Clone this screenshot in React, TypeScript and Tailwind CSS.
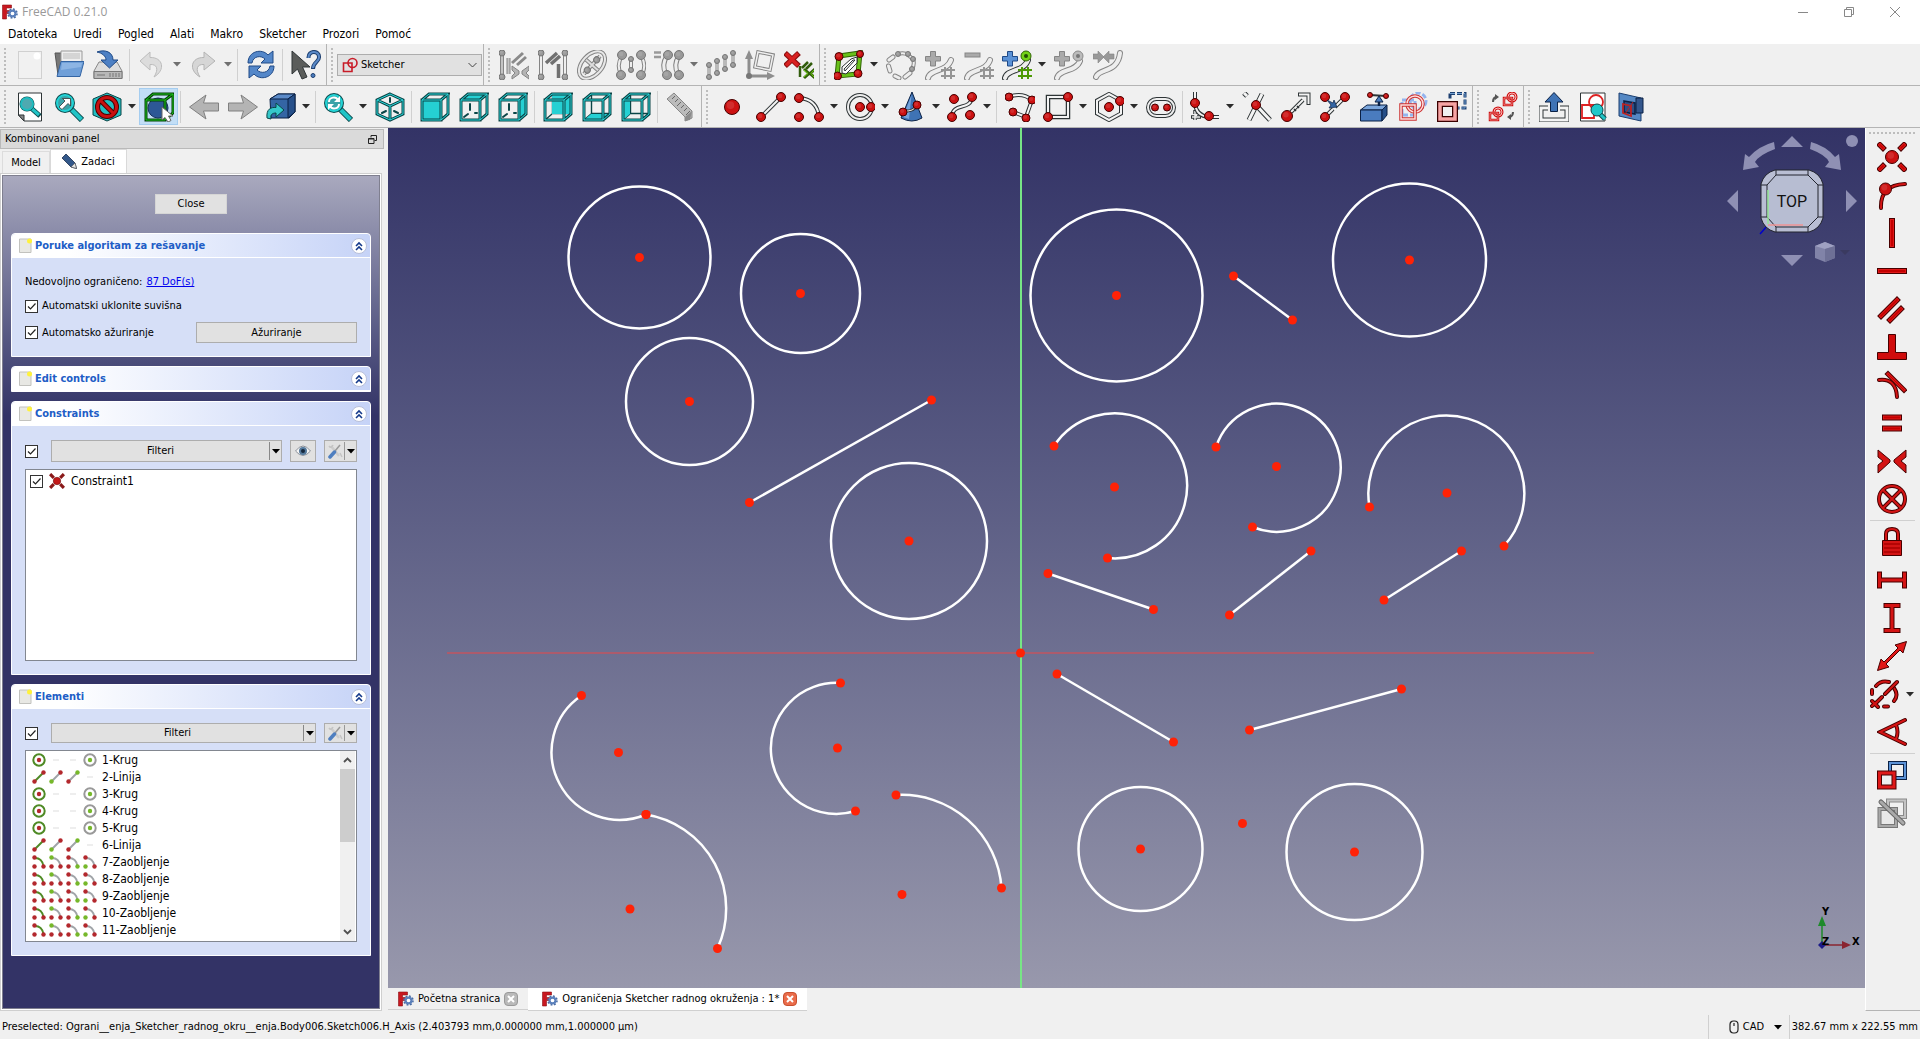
import React, { useState } from "react";

type P = { children?: React.ReactNode };
type RailProps = { d: string; c?: string; f?: string; w?: number; cap?: "round" | "butt" | "square" };

const INK = "#2e3436";
const GREY = "#858585";
const SILVER = "#c4c4c4";
const RED = "#cc1111";
const MAROON = "#480000";

const Svg = ({ children }: P) => (
  <svg viewBox="0 0 30 30" className="size-[30px] shrink-0" fill="none" aria-hidden="true">
    {children}
  </svg>
);

// outlined stroke: dark line with a lighter one on top
const Rail = ({ d, c = INK, f = "#f4f4f4", w = 4, cap = "butt" }: RailProps) => (
  <>
    <path d={d} stroke={c} strokeWidth={w} strokeLinecap={cap} />
    <path d={d} stroke={f} strokeWidth={w - 2} strokeLinecap={cap} />
  </>
);

const Dot = ({ x, y, r = 4.5, f = RED, c = MAROON }: { x: number; y: number; r?: number; f?: string; c?: string }) => (
  <>
    <circle cx={x} cy={y} r={r} fill={f} stroke={c} />
    <circle cx={x - r * 0.2} cy={y - r * 0.25} r={r * 0.5} fill="#fff" fillOpacity={0.12} />
  </>
);

const GDot = ({ x, y, r = 3 }: { x: number; y: number; r?: number }) => <Dot x={x} y={y} r={r} f="#999" c="#777" />;

const Bar = ({ d, w = 6 }: { d: string; w?: number }) => (
  <>
    <path d={d} stroke={MAROON} strokeWidth={w} strokeLinecap="square" />
    <path d={d} stroke="#e01818" strokeWidth={w - 2} strokeLinecap="square" />
    <path d={d} stroke="#c40000" strokeWidth={w - 4} strokeLinecap="square" />
  </>
);

const Magnifier = ({ children }: P) => (
  <Svg>
    <path d="M17 17 28 28" stroke="#0c4a4d" strokeWidth="6" />
    <path d="M17 17 27.500 27.500" stroke="#20c4c6" strokeWidth="4" />
    <circle cx="11" cy="11" r="10" fill="#0c4a4d" />
    <circle cx="11" cy="11" r="8" fill="#3aa3a8" stroke="#22d4d6" strokeWidth="2" />
    {children}
  </Svg>
);

const faces: Record<string, string> = {
  front: "M1 8H21V29H1Z",
  top: "M1 8 9 1H29L21 8Z",
  right: "M21 8 29 1V22L21 29Z",
  rear: "M9 2H28V22H9Z",
  bottom: "M1 29 9 22H29L21 29Z",
  left: "M1 8 9 1V22L1 29Z",
};

const Cube = ({ face }: { face: string }) => {
  const seeThrough = face === "rear" || face === "bottom" || face === "left";
  return (
    <Svg>
      {seeThrough && <path d="M9.500 2V22M9.500 21.500H28M9 22 2 28" stroke="#0a4547" strokeWidth="1.400" />}
      <path d={faces[face]} fill="#25d0d3" />
      {(face === "top" || face === "right") && (
        <path d="M5 25 9 22M11 12V18M16 21H18" stroke="#0a4547" strokeWidth="2" strokeLinecap="round" />
      )}
      <Rail d="M2 8H21V28H2ZM2 8 9 2H28L21 8M28 2V22L21 28" c="#0a4547" f="#2bd9dc" w={3} />
    </Svg>
  );
};

const CurveGrid = ({ c, grid }: { c: string; grid: string }) => (
  <>
    <Rail d="M3 28C5 19 22 22 26 10" c={c} f="#eee" w={6} cap="round" />
    <path d="M20 17V29M26 17V29M16 20H30M16 26H30" stroke={grid} strokeWidth="2" />
  </>
);

const Plus = ({ f, c }: { f: string; c: string }) => (
  <path d="M5.500 1.500h5v5h5v4.500h-5v5h-5v-5h-5v-4.500h5z" fill={f} stroke={c} />
);

const FreeCadLogo = () => (
  <svg viewBox="0 0 16 16" className="size-4 shrink-0" aria-hidden="true">
    <path d="M.5 1H9.500V4H4.500V6.500H7.500V9.500H4.500V15H.5Z" fill="#c91820" stroke="#8c1016" strokeWidth=".6" />
    <circle cx="10.500" cy="9.500" r="4.500" fill="none" stroke="#4a6ca3" strokeWidth="1.600" strokeDasharray="1.800 1.730" />
    <circle cx="10.500" cy="9.500" r="2.900" fill="none" stroke="#5b80bb" strokeWidth="2.200" />
    <circle cx="10.500" cy="9.500" r="1.600" fill="#fff" />
  </svg>
);

const icons: Record<string, React.ReactNode> = {
  new: (
    <Svg>
      <rect x="3.500" y="1.500" width="23" height="27" fill="#f1f1f1" stroke="#d0d0d0" />
      <circle cx="22" cy="6" r="3.500" fill="#fff" />
    </Svg>
  ),
  open: (
    <Svg>
      <path d="M1 3H8L10 5V25H4Z" fill="#777" stroke="#555" />
      <path d="M7 1H28V15H7Z" fill="#eee" stroke="#999" />
      <path d="M9 4H26M9 6H26M9 8H26" stroke="#bbb" />
      <path d="M7 11.500H30L26 26.500H3Z" fill="#6f9fd8" stroke="#3465a4" />
      <path d="M8 13H28L27 17 7 20Z" fill="#8db5e4" />
    </Svg>
  ),
  save: (
    <Svg>
      <path d="M6 12H24L29 21V28.500H1V21Z" fill="#ddd" stroke="#888" />
      <path d="M1 21.500H29V28.500H1Z" fill="#b8b8b8" stroke="#777" />
      <path d="M4 25H12M17 23V27M20 23V27M23 23V27M26 23V27" stroke="#777" />
      <path d="M4 2C12-1 20 2 20 10H25L16.500 18 8 10H13C13 6 9 3 4 2Z" fill="#4d80c4" stroke="#204a87" />
    </Svg>
  ),
  undo: (
    <Svg>
      <path d="M13 2 3 11 13 20V14.500C20 14 22 19 17 27 29 20 26 7 13 7.500Z" fill="#dcdcdc" stroke="#bcbcbc" />
    </Svg>
  ),
  redo: (
    <Svg>
      <path d="M16 2 27 11 16 20V14.500C9 14 7 19 12 27 0 20 3 7 16 7.500Z" fill="#d6d6d6" stroke="#b4b4b4" />
    </Svg>
  ),
  refresh: (
    <Svg>
      <path d="M2 13C2 1 16-2 22 5L27 1V13H15L19 9C15 5 7 6 6 13Z" fill="#5487c9" stroke="#204a87" />
      <path d="M28 16C28 28 14 31 8 24L3 28V16H15L11 20C15 24 23 23 24 16Z" fill="#5487c9" stroke="#204a87" />
    </Svg>
  ),
  whatsthis: (
    <Svg>
      <path d="M1 1V24L6.500 19 11 29 16 27 11.500 17H19Z" fill="#5a5c5a" stroke="#2e3436" />
      <path d="M17.500 8C17 0 28.500 0 28 7.500 28 12 22 12 22 19" stroke="#1d3f70" strokeWidth="4" />
      <path d="M17.500 8C17 0 28.500 0 28 7.500 28 12 22 12 22 18" stroke="#5b8ac8" strokeWidth="2" />
      <circle cx="22" cy="25.500" r="2" fill="#4a7bbd" stroke="#1d3f70" />
    </Svg>
  ),
  connect: (
    <Svg>
      <Rail d="M3 3V27" c={GREY} f={SILVER} />
      <GDot x={3} y={3} /><GDot x={3} y={27} />
      <Rail d="M9.500 8V24" c={GREY} f={SILVER} />
      <path d="M13 13 24 3M18 15 27 7" stroke="#8a8a8a" strokeWidth="3" />
      <path d="M13 16V20L16 23 13 26V29L20 24V21ZM30 16V20L27 23 30 26V29L23 24V21Z" fill="#b4b4b4" stroke={GREY} />
    </Svg>
  ),
  constr: (
    <Svg>
      <Rail d="M3 3V27M27 3V27" c={GREY} f="#eee" />
      <GDot x={3} y={3} /><GDot x={3} y={27} /><GDot x={27} y={3} /><GDot x={27} y={27} />
      <path d="M8 13 19 3M13 14 22 6M20.500 14V28" stroke="#707070" strokeWidth="3.500" />
    </Svg>
  ),
  internal: (
    <Svg>
      <g transform="rotate(-48 15 15)">
        <ellipse cx="15" cy="15" rx="16" ry="10" stroke={GREY} strokeWidth="4" />
        <ellipse cx="15" cy="15" rx="16" ry="10" stroke="#e8e8e8" strokeWidth="2" />
        <Rail d="M3 15H27M15 7V23" c={GREY} f="#ddd" />
        <GDot x={8} y={15} /><GDot x={22} y={15} />
      </g>
    </Svg>
  ),
  symmetry: (
    <Svg>
      <Rail d="M6 6Q0 15 5 24M25 6Q31 15 26 24M15 9V19" c={GREY} f="#eee" />
      <GDot x={6} y={5} r={4.5} /><GDot x={5} y={25} r={4.5} /><GDot x={25} y={5} r={4.5} /><GDot x={25} y={25} r={4.5} />
      <GDot x={15} y={9} r={2.5} /><GDot x={15} y={20} r={2.5} />
    </Svg>
  ),
  clone: (
    <Svg>
      <path d="M0 2.500H7M0 7H7" stroke="#999" strokeWidth="2.500" />
      <Rail d="M13 6Q7 15 12 24M25 6Q19 15 24 24" c={GREY} f="#eee" w={5} />
      <GDot x={14} y={5} r={4.5} /><GDot x={13} y={25} r={4.5} /><GDot x={25} y={5} r={4.5} /><GDot x={25} y={25} r={4.5} />
    </Svg>
  ),
  array: (
    <Svg>
      <Rail d="M3 15V27M11 11V23M19 7V19M27 3V15" c={GREY} f="#eee" w={3} />
      {[3, 11, 19, 27].map((x, i) => (
        <g key={x}><GDot x={x} y={15 - i * 4} r={2.5} /><GDot x={x} y={27 - i * 4} r={2.5} /></g>
      ))}
    </Svg>
  ),
  axes: (
    <Svg>
      <path d="M4 25V7M4 26H23" stroke="#8e8e8e" strokeWidth="3" />
      <path d="M4 0 8 9H0ZM30 26 22 22V30Z" fill="#8e8e8e" />
      <circle cx="4" cy="26" r="3" fill="#777" />
      <path d="M13 2 28 5 25 20 10 17Z" stroke={GREY} strokeWidth="3.500" />
      <path d="M13 2 28 5 25 20 10 17Z" stroke="#f0f0f0" strokeWidth="1.500" />
    </Svg>
  ),
  removeAxes: (
    <Svg>
      <path d="M1 3 15 16M15 3 1 16" stroke="#8c1010" strokeWidth="5.500" />
      <path d="M2 3.500 14 15.500M14 3.500 2 15.500" stroke="#d82020" strokeWidth="3.500" />
      <path d="M16 16V27M18 18 24 12M22 19 28 13" stroke="#315c0c" strokeWidth="2.500" />
      <path d="M20 19 25 23.500 20 28M31 19 26 23.500 31 28" stroke="#2f5c08" strokeWidth="3" />
      <path d="M20 20 24 23.500 20 27M30 20 27 23.500 30 27" stroke="#73d216" strokeWidth="1" />
    </Svg>
  ),
  validate: (
    <Svg>
      <Rail d="M5 6 26 3 24 24 3 26Z" c="#2f6404" f="#69c01a" w={5} />
      <path d="M8 17V23L12 24 23 13V7L17 9Z" fill="#fff" stroke={INK} />
      <path d="M10 19 19 10H21L11 21Z" fill="#eee" stroke={INK} />
      <Dot x={5} y={6.5} r={4} /><Dot x={26} y={4} r={3.5} /><Dot x={3.5} y={26} r={4} /><Dot x={24} y={23.5} r={4} />
    </Svg>
  ),
  closed: (
    <Svg>
      <Rail d="M2.500 16 4 21M9 26 13 28M19 27 24 23M3 10 7 7" c={GREY} f="#eee" w={5} cap="round" />
      <Rail d="M12 4Q18 2 22 5L27 9Q29 14 26 19" c={GREY} f="#eee" w={4} />
      <GDot x={12} y={4} r={2.5} /><GDot x={22} y={4} r={2.5} /><GDot x={27} y={9} r={2.5} /><GDot x={26} y={19} r={2.5} />
    </Svg>
  ),
  degUp: <Svg><CurveGrid c={GREY} grid="#959595" /><Plus f="#aaa" c="#858585" /></Svg>,
  degDown: <Svg><CurveGrid c={GREY} grid="#959595" /><rect x="1" y="3" width="15" height="4" fill="#aaa" stroke="#858585" /></Svg>,
  knotUp: (
    <Svg>
      <CurveGrid c={INK} grid="#4e9a06" />
      <Plus f="#5b92d6" c="#204a87" />
      <circle cx="24" cy="6" r="5" fill="#73d216" stroke="#2f6404" /><circle cx="24" cy="6" r="2" fill="#234d04" />
    </Svg>
  ),
  knotDown: (
    <Svg>
      <Rail d="M3 28C5 19 22 22 26 11" c={GREY} f="#eee" w={6} cap="round" />
      <Plus f="#aaa" c="#858585" />
      <circle cx="24" cy="6" r="5" fill="#bbb" stroke="#8a8a8a" /><circle cx="24" cy="6" r="2" fill="#777" />
    </Svg>
  ),
  join: (
    <Svg>
      <Rail d="M3 27C6 18 25 23 27 3" c={GREY} f="#eee" w={6} cap="round" />
      <path d="M0 4H5V1L11 7 5 13V9H0ZM21 4H16V1L10 7 16 13V9H21Z" fill="#999" stroke="#858585" strokeWidth=".6" />
    </Svg>
  ),
  fitAll: (
    <Svg>
      <path d="M3.500 1H26.500V29H9L3.500 23Z" fill="#fff" stroke={INK} />
      <path d="M3.500 23H9V29Z" fill="#888" stroke={INK} />
      <path d="M16 16 25 24" stroke="#0c4a4d" strokeWidth="5" /><path d="M16 16 24 23" stroke="#22c4c6" strokeWidth="3" />
      <circle cx="12" cy="12" r="7.500" fill="#0c4a4d" />
      <circle cx="12" cy="12" r="6" fill="#4fa9b0" stroke="#20bcbf" strokeWidth="2" />
    </Svg>
  ),
  fitSel: <Magnifier><path d="M5 15 11 9 8.500 6.500H16.500V14L14 11.500 8 17.500Z" fill="#fff" stroke="#333" strokeWidth=".8" /></Magnifier>,
  drawStyle: (
    <Svg>
      <path d="M15 1 29 7V23L15 29 1 23V7Z" fill="#22bfc2" stroke="#0a4547" />
      <circle cx="15" cy="15" r="9.500" stroke="#480000" strokeWidth="5" /><path d="M8 8 22 22" stroke="#480000" strokeWidth="5" />
      <circle cx="15" cy="15" r="9.500" stroke="#c81010" strokeWidth="3" /><path d="M8 8 22 22" stroke="#c81010" strokeWidth="3" />
    </Svg>
  ),
  selection: (
    <Svg>
      <circle cx="14" cy="16" r="10" fill="#2d5896" stroke="#14305c" />
      <Rail d="M2 8H21V28H2ZM2 8 9 2H29L21 8M29 2V21L21 28" c="#053f05" f="#19c81e" w={3} />
      <path d="M18 15V28L21 25.500 24 30 27 28.500 24.500 24H29Z" fill="#fff" stroke="#666" />
    </Svg>
  ),
  back: <Svg><path d="M.5 15 17 3 14.500 11H29.500V19H14.500L17 27Z" fill="#b4b4b4" stroke="#808080" /></Svg>,
  forward: <Svg><path d="M29.500 15 13 3 15.500 11H.5V19H15.500L13 27Z" fill="#b4b4b4" stroke="#808080" /></Svg>,
  link: (
    <Svg>
      <path d="M4 7 12 2H29V20L23 26H5Z" fill="#3465a4" stroke="#0b2145" />
      <path d="M4 7 12 2H29L22 7Z" fill="#5b8ac8" stroke="#0b2145" /><path d="M22 7 29 2V20L22 26Z" fill="#27508a" stroke="#0b2145" />
      <path d="M1 26C0 17 5 15 10 15.500V11L18 18 10 25V21C6 21 4 23 5 27Z" fill="#35c8ca" stroke="#0a4547" />
    </Svg>
  ),
  sync: <Magnifier><path d="M6 10C6 5 13 4 15 8M16 12C16 17 9 18 7 14" stroke="#fff" strokeWidth="2" /><path d="M17 4V10H11ZM5 18V12H11Z" fill="#fff" /></Magnifier>,
  iso: (
    <Svg>
      <Rail d="M15 2 28 8V22L15 28 2 22V8ZM2 8 15 14 28 8M15 14V28" c="#0a4547" f="#2bd9dc" w={3} />
      <path d="M15 6V10M7 21 11 19M23 21 19 19" stroke="#0a4547" strokeWidth="2" strokeLinecap="round" />
    </Svg>
  ),
  ...Object.fromEntries(Object.keys(faces).map((f) => [f, <Cube face={f} />])),
  measure: (
    <Svg>
      <path d="M1 7 8 1 26 19V26L19 29V25Z" fill="#bbb" stroke="#888" />
      <path d="M9 4 6 7M12 7 9 10M15 10 11 14M18 13 15 16M21 16 18 19M24 19 20 23" stroke="#666" />
      <path d="M26 19 19 25V29L24 28Z" fill="#8c8c8c" />
    </Svg>
  ),
  point: <Svg><Dot x={15} y={15} r={7.5} /></Svg>,
  line: <Svg><Rail d="M5 25 25 5" /><Dot x={25} y={5} /><Dot x={5} y={25} /></Svg>,
  arc: <Svg><Rail d="M5 6Q23 7 25 25" /><Dot x={5} y={6} /><Dot x={5} y={25} /><Dot x={25} y={25} /></Svg>,
  circle: <Svg><circle cx="15" cy="15" r="12" stroke={INK} strokeWidth="4" /><circle cx="15" cy="15" r="12" stroke="#eee" strokeWidth="2" /><Dot x={15} y={15} /><Dot x={26} y={15} /></Svg>,
  conic: (
    <Svg>
      <path d="M16 0 26 26Q16 32 5 26Z" fill="#3f73b5" stroke="#0b2145" /><path d="M15.500 3 13 27 7 25Z" fill="#74a2da" />
      <Rail d="M7 19Q18 20 21 13" w={3} /><Dot x={7} y={20} r={4} /><Dot x={21} y={13} r={4} />
    </Svg>
  ),
  bspline: <Svg><Rail d="M5 25C5 10 24 19 25 5" /><Dot x={25} y={5} /><Dot x={7} y={7} /><Dot x={5} y={25} /><Dot x={23} y={23} /></Svg>,
  polyline: <Svg><Rail d="M4 5Q17 0 27 8L21 25 8 20" /><Dot x={4} y={5} r={4} /><Dot x={27} y={8} r={4} /><Dot x={21} y={26} r={4} /><Dot x={8} y={20} r={4} /></Svg>,
  rect: <Svg><path d="M5 5H25V25H5Z" stroke={INK} strokeWidth="4.500" /><path d="M5 5H25V25H5Z" stroke="#f4f4f4" strokeWidth="2" /><Dot x={25} y={5} /><Dot x={5} y={25} /></Svg>,
  polygon: <Svg><Rail d="M15 2 27 8.500V21.500L15 28 3 21.500V8.500Z" /><Dot x={15} y={15} /><Dot x={26} y={9} /></Svg>,
  slot: <Svg><rect x="2" y="7" width="26" height="17" rx="8.500" stroke={INK} strokeWidth="4" /><rect x="2" y="7" width="26" height="17" rx="8.500" stroke="#eee" strokeWidth="2" /><Dot x={9} y={15.5} r={3.5} /><Dot x={21} y={15.5} r={3.5} /></Svg>,
  fillet: (
    <Svg>
      <path d="M5 18V29M1 25H11" stroke={INK} strokeWidth="3.500" strokeDasharray="4 2" /><path d="M5 19V28M2 25H10" stroke="#eee" strokeWidth="1.500" />
      <Rail d="M5 0V11Q6 24 19 25H29" /><Dot x={5} y={11} /><Dot x={19} y={24} />
    </Svg>
  ),
  trim: <Svg><Rail d="M2 1 5 4M14 13 28 28M20 2 7 28" w={5} /><Dot x={14} y={13} /></Svg>,
  extend: <Svg><Rail d="M10 20 22 8" w={4} /><path d="M17 2.500H27.500V13" stroke={INK} strokeWidth="4" /><path d="M18 2.500H27.500V12" stroke="#f4f4f4" strokeWidth="2" /><path d="M13 17 15 19M16 14 18 16" stroke={INK} strokeWidth="1.500" /><Dot x={6} y={24} r={5.5} /></Svg>,
  split: <Svg><Rail d="M15 15 25 5M5 25 13 17" /><Dot x={25} y={5} /><Dot x={5} y={5} /><Dot x={5} y={25} /><path d="M7 8 13 11 14 8 17 15 9 16 11 13Z" fill="#3465a4" stroke="#0b2145" strokeWidth=".7" /></Svg>,
  external: (
    <Svg>
      <path d="M1.500 18 8 13H28L23 18Z" fill="#7ba6dc" stroke="#0b2145" /><path d="M1.500 18H23V29H1.500Z" fill="#4a7cbf" stroke="#0b2145" /><path d="M23 18 28 13V23L23 29Z" fill="#274f87" stroke="#0b2145" />
      <path d="M11 3 27 4" stroke={INK} strokeWidth="2" /><path d="M20 14V9" stroke="#0b2145" strokeWidth="2.500" /><path d="M20 4 24 10H16Z" fill="#4a7cbf" stroke="#0b2145" />
      <Dot x={11} y={3} r={2.5} /><Dot x={27} y={4} r={2.5} />
    </Svg>
  ),
  carbon: (
    <Svg>
      <circle cx="20" cy="9" r="8" stroke="#94b4ee" strokeWidth="3" strokeDasharray="5 2" />
      <path d="M4 8H17V23H4Z" stroke="#94b4ee" strokeWidth="3" strokeDasharray="5 2" />
      <circle cx="17" cy="12" r="8" stroke="#c33" strokeWidth="3.500" /><circle cx="17" cy="12" r="8" stroke="#fdd" strokeWidth="1.500" />
      <path d="M3 13H17V27H3Z" stroke="#c33" strokeWidth="3.500" /><path d="M3 13H17V27H3Z" stroke="#fdd" strokeWidth="1.500" />
    </Svg>
  ),
  construction: (
    <Svg>
      <path d="M13 1.500H28V16H20M13 1.500V8" stroke="#1d3f70" strokeWidth="3" strokeDasharray="5 2" /><path d="M13 1.500H28V16H20" stroke="#729fcf" strokeDasharray="5 2" />
      <rect x="3" y="12" width="15" height="15" stroke="#3a0000" strokeWidth="6" /><rect x="3" y="12" width="15" height="15" stroke="#f8a4a4" strokeWidth="3.500" />
    </Svg>
  ),
  toggle: (
    <Svg>
      <circle cx="24" cy="5" r="4" stroke={RED} strokeWidth="3" /><circle cx="24" cy="5" r="4" stroke="#fbb" />
      <path d="M16 6H24V13H16Z" stroke={RED} strokeWidth="2.500" /><path d="M16 6H24V13H16Z" stroke="#fbb" strokeWidth=".6" />
      <circle cx="10" cy="20" r="4" stroke={RED} strokeWidth="3" /><circle cx="10" cy="20" r="4" stroke="#fbb" />
      <path d="M2 21H10V28H2Z" stroke={RED} strokeWidth="2.500" /><path d="M2 21H10V28H2Z" stroke="#fbb" strokeWidth=".6" />
      <path d="M5 10Q5 6 8 5M25 20Q25 24 22 25" stroke="#555" strokeWidth="2" />
      <path d="M7 2 11 5 7 8ZM23 22 19 25 23 28Z" fill="#555" />
    </Svg>
  ),
  leave: <Svg><Rail d="M9 16H2V28H28V16H21" w={5} /><path d="M15 .5 24 10H18.500V19.500H11.500V10H6Z" fill="#3f73b5" stroke="#0b2145" /></Svg>,
  viewSketch: (
    <Svg>
      <path d="M2.500 1H27V29H2.500Z" fill="#fff" stroke={INK} /><circle cx="18" cy="10" r="7" stroke="#d22" strokeWidth="1.800" /><path d="M4 13H16V26H4Z" stroke="#d22" strokeWidth="1.800" />
      <path d="M22 22 27 27" stroke="#0c4a4d" strokeWidth="5" /><path d="M22 22 27 27" stroke="#22c4c6" strokeWidth="3" /><circle cx="19" cy="18" r="6" fill="#22c8ca" stroke="#0c4a4d" />
    </Svg>
  ),
  section: (
    <Svg>
      <path d="M2 1 24 6V29L2 24Z" fill="#5588c4" stroke="#1d3f70" /><path d="M19 6H26V21H19Z" fill="#33568c" stroke="#0b2145" />
      <path d="M7 9 18 11V22L7 20Z" fill="#2d4f86" stroke="#0b2145" strokeWidth="1.500" /><path d="M6 12 14 14V24L6 21Z" stroke="#b22" strokeWidth="1.800" /><path d="M8 22 16 10" stroke="#b22" />
    </Svg>
  ),
  coincident: <Svg><Bar d="M3 3 6 6M27 3 24 6M3 27 6 24M27 27 24 24" w={5.5} /><Dot x={15} y={15} r={6.5} /></Svg>,
  onObject: <Svg><Rail d="M4 28Q3 5 28 4" c={MAROON} f="#d41414" w={4} cap="round" /><Dot x={8.5} y={9} r={6} /></Svg>,
  vertical: <Svg><Bar d="M15 3V27" /></Svg>,
  horizontal: <Svg><Bar d="M3 15H27" /></Svg>,
  parallel: <Svg><Bar d="M4 22 20 6M13 26 24 15" w={5.5} /></Svg>,
  perpendicular: <Svg><path d="M11.500 2.500H18.500V20.500H29.500V27.500H.5V20.500H11.500Z" fill="#d00c0c" stroke={MAROON} /></Svg>,
  tangent: <Svg><Rail d="M2 10Q19 8 20 27" c={MAROON} f="#d41414" w={4} cap="round" /><Bar d="M11 4 27 20" w={5} /></Svg>,
  equal: <Svg><Bar d="M8 9.500H22M8 20.500H22" w={6} /></Svg>,
  symmetric: <Svg><path d="M1 4 13 14V16L1 27V19L6 15 1 11ZM29 4 17 14V16L29 27V19L24 15 29 11Z" fill="#d41414" stroke={MAROON} /></Svg>,
  block: <Svg><circle cx="15" cy="15" r="13" stroke={MAROON} strokeWidth="4" /><path d="M6 6 24 24M24 6 6 24" stroke={MAROON} strokeWidth="4" /><circle cx="15" cy="15" r="13" stroke="#d41414" strokeWidth="2" /><path d="M6 6 24 24M24 6 6 24" stroke="#d41414" strokeWidth="2" /></Svg>,
  lock: <Svg><Rail d="M9 14V7Q9 2 15 2T21 7V14" c={MAROON} f="#d41414" /><path d="M5.500 13.500H24.500V28.500H5.500Z" fill="#d41414" stroke={MAROON} /><path d="M7 17H23M7 21H23M7 25H23" stroke="#a00" strokeWidth="1.500" /></Svg>,
  distX: <Svg><Rail d="M2.500 9V21M27.500 9V21M3 15H27" c={MAROON} f="#d41414" w={5} cap="square" /></Svg>,
  distY: <Svg><Rail d="M9 2.500H21M9 27.500H21M15 3V27" c={MAROON} f="#d41414" w={5} cap="square" /></Svg>,
  distance: <Svg><path d="M29.500.5 26 12 23 9 9 23 12 26 .5 29.500 4 18 7 21 21 7 18 4Z" fill="#e01818" stroke={MAROON} /></Svg>,
  diameter: (
    <Svg>
      <Rail d="M6 7Q11 1 19 3M24 9Q29 16 24 22M2 11V15M14 27.500H18" c={MAROON} f="#d41414" w={4} cap="round" />
      <Rail d="M27 3 15 15M12 18 5 25M2 22 8 28M2 27 8 22" c={MAROON} f="#d41414" w={4} cap="round" />
    </Svg>
  ),
  angle: <Svg><Rail d="M28 3 3 15 28 27M19 8Q22 15 19 22" c={MAROON} f="#d41414" w={4} cap="round" /></Svg>,
  driving: (
    <Svg>
      <path d="M13 3H28V18H13Z" stroke="#0b2145" strokeWidth="4" /><path d="M13 3H28V18H13Z" stroke="#5b92d6" strokeWidth="2" />
      <path d="M2.500 13H17V27H2.500Z" fill="#eee" stroke={MAROON} strokeWidth="5" /><path d="M2.500 13H17V27H2.500Z" stroke="#e01818" strokeWidth="3" />
    </Svg>
  ),
  activate: (
    <Svg>
      <path d="M11 2.500H28V19H11Z" stroke="#8a8a8a" strokeWidth="4" /><path d="M11 2.500H28V19H11Z" stroke="#c4c4c4" strokeWidth="2" />
      <path d="M2.500 11H19V28H2.500Z" fill="#e8e8e8" stroke="#777" strokeWidth="4" /><path d="M2.500 11H19V28H2.500Z" stroke="#a8a8a8" strokeWidth="2" />
      <path d="M4 4 26 25" stroke="#666" strokeWidth="5" strokeLinecap="round" /><path d="M4 4 26 25" stroke="#aaa" strokeWidth="3" strokeLinecap="round" />
    </Svg>
  ),
};

const Triangle = ({ className = "text-[#2b2b2b]" }: { className?: string }) => (
  <svg viewBox="0 0 8 5" className={"h-[5px] w-2 shrink-0 " + className} aria-hidden="true">
    <path d="M0 0H8L4 4.500Z" fill="currentColor" />
  </svg>
);

// "|" is a separator, a trailing "+" adds the drop-down arrow, "-" a dimmed one
const ToolItem = ({ name }: { name: string }) => {
  if (name === "|") return <span className="mx-0.5 h-8 w-0.5 border-l border-[#d0d0d0]" />;
  const key = name.replace(/[+-]$/, "");
  const menu = name !== key;
  return (
    <button
      aria-label={key}
      className={
        "flex h-[37px] items-center " +
        (menu ? "w-[51px] gap-1.5 pl-1" : "w-[39px] justify-center") +
        (key === "selection" ? " bg-[#c2def6] border border-[#a5cdf0]" : "")
      }
    >
      {icons[key]}
      {menu && <Triangle className={name.endsWith("-") ? "text-[#707070]" : "text-[#2b2b2b]"} />}
    </button>
  );
};

const Toolbar = ({ items, label, children, last }: { items?: string[]; label: string; last?: boolean } & P) => (
  <div role="toolbar" aria-label={label} className={"flex items-center pr-px " + (last ? "grow" : "border-r border-[#b4b4b4]")}>
    <span className="mx-1 h-[34px] border-l-2 border-dotted border-[#bdbdbd]" />
    {children}
    {items?.map((n, i) => <ToolItem key={i} name={n} />)}
  </div>
);

const Check = ({ id, label }: { id: string; label: string }) => {
  const [on, setOn] = useState(true);
  return (
    <span className="grid size-[13px] shrink-0">
      <input
        id={id}
        type="checkbox"
        aria-label={label}
        checked={on}
        onChange={() => setOn(!on)}
        className="col-start-1 row-start-1 size-[13px] appearance-none border border-[#333] bg-white"
      />
      {on && (
        <svg viewBox="0 0 13 13" className="pointer-events-none col-start-1 row-start-1 size-[13px]" fill="none" aria-hidden="true">
          <path d="M3 6.500 5.500 9 10.500 3.500" stroke="#222" strokeWidth="1.200" />
        </svg>
      )}
    </span>
  );
};

const TaskBox = ({ title, children }: { title: string } & P) => (
  <section className="rounded-t border border-white bg-[#d6dff7]">
    <h2 className="flex h-6 items-center gap-0.5 rounded-t border-b border-white bg-linear-to-r from-white from-15% to-[#c6d3f7] pl-1.5 pr-[3px] text-[11px] font-bold text-[#215dc6]">
      <svg viewBox="0 0 15 15" className="size-[15px]" aria-hidden="true">
        <path d="M1.500 1H13V14.500H1.500Z" fill="#e8e8e4" stroke="#c2c2be" />
        <circle cx="11.500" cy="3" r="2.500" fill="#fff23c" />
      </svg>
      <span className="grow">{title}</span>
      <button aria-label={"Collapse " + title} className="flex size-4 items-center justify-center rounded-full border border-[#b8c0da] bg-white">
        <svg viewBox="0 0 10 10" className="size-2.5" fill="none" stroke="#14398a" strokeWidth="1.600" aria-hidden="true">
          <path d="M2 5 5 2 8 5M2 9 5 6 8 9" />
        </svg>
      </button>
    </h2>
    {children}
  </section>
);

const Wrench = () => (
  <div className="flex w-[33px] border border-[#adadad] bg-[#e1e1e1]">
    <button aria-label="Settings" className="grow pl-0.5">
      <svg viewBox="0 0 16 16" className="size-4" fill="none" aria-hidden="true">
        <path d="M4 3 12 13" stroke="#ccc" strokeWidth="2.500" />
        <path d="M2 3Q4 6 6 2M13 10 15 14" stroke="#c4c4c4" strokeWidth="1.500" />
        <path d="M8 8 13 2" stroke="#999" strokeWidth="1.500" />
        <path d="M3 14 7.500 9" stroke="#4f7fc0" strokeWidth="3.500" strokeLinecap="round" />
      </svg>
    </button>
    <button aria-label="Settings menu" className="my-px flex w-3 items-center justify-center border-l border-[#999]"><Triangle className="text-black" /></button>
  </div>
);

const FilterRow = ({ id, eye }: { id: string; eye?: boolean }) => (
  <div className={"flex items-stretch gap-2 " + (eye ? "h-[22px]" : "h-5")}>
    <span className="mr-[5px] flex items-center"><Check id={id} label="Filteri" /></span>
    <div className="flex grow border border-[#adadad] bg-[#e1e1e1]">
      <button className="grow">Filteri</button>
      <button aria-label="Filteri menu" className="my-px flex w-3 items-center justify-center border-l border-[#888]"><Triangle className="text-black" /></button>
    </div>
    {eye && (
      <button aria-label="Show" className="flex w-[26px] items-center justify-center border border-[#adadad] bg-[#e1e1e1]">
        <svg viewBox="0 0 16 12" className="h-3 w-4" aria-hidden="true">
          <path d="M.5 6Q8-4 15.500 6 8 15 .5 6Z" fill="#f4f4f4" stroke="#8a8f98" />
          <circle cx="8" cy="6" r="4" fill="#54799c" />
          <circle cx="8" cy="6" r="2" fill="#16283c" />
        </svg>
      </button>
    )}
    <Wrench />
  </div>
);

const EL_RED = "#b3282d";
const EL_GREEN = "#76b82a";

const Dash = () => <path d="M4 7H10" stroke="#ddd" />;

const ElementIcon = ({ kind, slot }: { kind: string; slot: number }) => {
  const dot = (x: number, y: number, on: boolean) => <circle cx={x} cy={y} r="2.200" fill={on ? EL_GREEN : EL_RED} />;
  const edge = slot === 0 ? "#4f8a25" : "#a0a4a8";
  return (
    <svg viewBox="0 0 14 14" className="size-3.5" fill="none" aria-hidden="true">
      {kind === "Krug" &&
        (slot === 1 || slot === 2 ? <Dash /> : (
          <>
            <circle cx="7" cy="7" r="5.700" stroke={slot ? "#999" : edge} strokeWidth="2" />
            {dot(7, 7, slot === 3)}
          </>
        ))}
      {kind === "Linija" &&
        (slot === 3 ? <Dash /> : (
          <>
            <path d="M2.500 11.500 11.500 2.500" stroke={edge} strokeWidth="2" />
            {dot(2.5, 11.5, slot === 1)}
            {dot(11.5, 2.5, slot === 2)}
          </>
        ))}
      {kind === "Zaobljenje" && (
        <>
          <path d="M3 3Q10 3 11.500 11" stroke={edge} strokeWidth="1.800" />
          {dot(2.5, 2.5, slot === 1)}
          {dot(2.5, 11.5, slot === 3)}
          {dot(11.5, 11.5, slot === 2)}
        </>
      )}
    </svg>
  );
};

const elements = ["Krug", "Linija", "Krug", "Krug", "Krug", "Linija", "Zaobljenje", "Zaobljenje", "Zaobljenje", "Zaobljenje", "Zaobljenje"];

const SidePanel = () => (
  <aside className="flex w-[388px] shrink-0 flex-col pt-px">
    <header className="mr-1 flex h-5 shrink-0 items-center justify-between border border-[#b9b9b9] bg-[#dadada] px-1">
      <span>Kombinovani panel</span>
      <button aria-label="Float panel" className="mr-0.5">
        <svg viewBox="0 0 9 9" className="size-[9px]" fill="none" stroke="#222" aria-hidden="true">
          <path d="M3 2.500V.5H8.500V5.500H6.500M.5 3.500H6V8.500H.5ZM.5 4H6" />
        </svg>
      </button>
    </header>
    <div className="flex h-6 shrink-0 items-end pl-0.5" role="tablist">
      <button role="tab" className="h-[22px] w-12 border border-b-0 border-[#dcdcdc]">Model</button>
      <button role="tab" aria-selected="true" className="flex h-6 w-[77px] items-center justify-center gap-1 border border-b-0 border-[#d9d9d9] bg-white">
        <svg viewBox="0 0 15 15" className="size-[15px]" aria-hidden="true">
          <path d="M0 4 4 0 13 9 14.500 14.500 9 13Z" fill="#33588a" stroke="#1c2f4c" strokeWidth=".8" />
          <path d="M9 13 13 9 14.500 14.500Z" fill="#e4e4e4" stroke="#555" strokeWidth=".6" />
        </svg>
        Zadaci
      </button>
    </div>
    <div className="mr-1.5 flex grow flex-col border border-[#cfcfcf] bg-white p-px">
      <div className="flex grow flex-col gap-[9px] border border-[#7f7f8f] bg-linear-to-b from-[#a9a9be] to-[#333366] to-[240px] px-2 pt-[18px]">
        <button className="mb-2.5 h-5 w-[72px] shrink-0 self-center border border-[#d5d5d5] bg-[#e1e1e1]">Close</button>
        <TaskBox title="Poruke algoritam za rešavanje">
          <div className="flex flex-col gap-2 px-[13px] pb-[13px] pt-4">
            <p className="flex h-4 items-center gap-1">
              Nedovoljno ograničeno: <a href="#dofs" className="text-[#0000ee] underline">87 DoF(s)</a>
            </p>
            <div className="flex h-4 items-center gap-1">
              <Check id="redundant" label="Automatski uklonite suvišna" />
              <label htmlFor="redundant">Automatski uklonite suvišna</label>
            </div>
            <div className="flex h-[21px] items-center gap-1">
              <Check id="auto" label="Automatsko ažuriranje" />
              <label htmlFor="auto" className="grow">Automatsko ažuriranje</label>
              <button className="h-full w-[161px] border border-[#adadad] bg-[#e1e1e1]">Ažuriranje</button>
            </div>
          </div>
        </TaskBox>
        <TaskBox title="Edit controls" />
        <TaskBox title="Constraints">
          <div className="flex flex-col gap-[7px] px-[13px] pb-[13px] pt-3.5">
            <FilterRow id="filter-constraints" eye />
            <ul className="h-48 border border-[#828790] bg-white px-1 pt-0.5 text-[12px]">
              <li className="flex h-[18px] items-center gap-1.5">
                <Check id="c1" label="Constraint1" />
                <svg viewBox="0 0 30 30" className="size-4" fill="none" aria-hidden="true">
                  <path d="M2 2 9 9M28 2 21 9M2 28 9 21M28 28 21 21" stroke="#8a1a1a" strokeWidth="6" />
                  <circle cx="15" cy="15" r="7" fill="#c41818" stroke="#601010" />
                </svg>
                <label htmlFor="c1">Constraint1</label>
              </li>
            </ul>
          </div>
        </TaskBox>
        <TaskBox title="Elementi">
          <div className="flex flex-col gap-[7px] px-[13px] pb-[13px] pt-3.5">
            <FilterRow id="filter-elements" />
            <div className="flex h-48 border border-[#828790] bg-white px-px text-[12px]">
              <ul className="grow pl-[5px]">
                {elements.map((kind, i) => (
                  <li key={i} className="flex h-[17px] items-center gap-[3px]">
                    {[0, 1, 2, 3].map((s) => <ElementIcon key={s} kind={kind} slot={s} />)}
                    <span className="pl-0.5">{i + 1}-{kind}</span>
                  </li>
                ))}
              </ul>
              <div className="flex w-[15px] flex-col bg-[#f0f0f0]">
                <button aria-label="Scroll up" className="flex h-[18px] items-center justify-center">
                  <svg viewBox="0 0 9 6" className="h-1.5 w-[9px]" fill="none" stroke="#505050" strokeWidth="1.800" aria-hidden="true"><path d="M1 5 4.500 1.500 8 5" /></svg>
                </button>
                <div className="h-[73px] bg-[#cdcdcd]" />
                <button aria-label="Scroll down" className="mt-auto flex h-[18px] items-center justify-center">
                  <svg viewBox="0 0 9 6" className="h-1.5 w-[9px]" fill="none" stroke="#505050" strokeWidth="1.800" aria-hidden="true"><path d="M1 1 4.500 4.500 8 1" /></svg>
                </button>
              </div>
            </div>
          </div>
        </TaskBox>
      </div>
    </div>
  </aside>
);

// sketch geometry, x y r
const circles = [
  [639.5, 257.5, 71], [800.5, 293.5, 59.5], [689.5, 401.5, 63.5], [909, 541, 78],
  [1116.5, 295.5, 86], [1409.5, 260, 76.5], [1140.5, 849, 62], [1354.5, 852, 68],
];
const lines = [
  [931.5, 400, 749.5, 502.5], [1233.5, 276, 1292.5, 320], [1048, 573.5, 1153.5, 609.5],
  [1311, 551, 1229.5, 615], [1461.5, 551, 1384, 600], [1057, 674, 1173.5, 742], [1401.5, 689, 1249.5, 730],
];
// cx cy r, start, end, large, sweep
const arcs = [
  [1114.5, 487, 72.5, 1054, 446, 1107.5, 558, 1, 1],
  [1276.5, 466.5, 64, 1216, 447, 1252.5, 527, 1, 1],
  [1447, 493, 78, 1369.5, 507, 1504, 546, 1, 1],
  [618.5, 752.5, 68, 581.5, 695.5, 646, 814.5, 0, 0],
  [630, 909, 95.5, 646, 814.5, 717.5, 948.5, 0, 1],
  [837.5, 748, 65.5, 840.5, 683, 855.5, 811, 1, 0],
  [902, 894.5, 100, 896, 795, 1001.5, 888, 0, 1],
];
const points = [
  ...circles.map(([x, y]) => [x, y]),
  ...lines.flatMap(([a, b, c, d]) => [[a, b], [c, d]]),
  ...arcs.flatMap(([cx, cy, , a, b, c, d]) => [[cx, cy], [a, b], [c, d]]),
  [1020.5, 653],
  [1242.5, 823.5],
];

const NavCube = () => (
  <svg viewBox="0 0 140 140" className="absolute right-0 top-0 size-[140px]" fill="#8f90b4" aria-label="Navigation cube">
    <path d="M67 8 78 19H56ZM67 138 56 127H78ZM2 73 13 62V84ZM132 73 121 62V84Z" />
    <path d="M49 14 50 21Q34 27 30 34L34 39 18 42 20 26 24 29Q34 18 49 14Z" />
    <path d="M86 14 85 21Q101 27 104 34L100 39 116 42 114 26 110 29Q101 18 86 14Z" />
    <circle cx="127" cy="13" r="6" />
    <path d="M35 106 43 97" stroke="#0000cc" strokeWidth="1.500" />
    <path d="M50 42H84Q95 45 98 56V90Q95 101 84 104H50Q39 101 36 90V56Q39 45 50 42Z" fill="#b9bed3" stroke="#22242e" />
    <path d="M51 47H83L93 57V89L83 99H51L42 89V57Z" fill="#b7bdd2" stroke="#22242e" />
    <path d="M51 42V47M83 42V47M51 99V104M83 99V104M36 57H42M36 89H42M93 57H98M93 89H98" stroke="#22242e" />
    <path d="M43 62V96" stroke="#94e694" strokeWidth="1.500" />
    <path d="M43 97H78" stroke="#ee9494" strokeWidth="1.500" />
    <text x="67" y="79" textAnchor="middle" fontSize="16" fill="#111" className="font-['Liberation_Sans_Narrow','Roboto',sans-serif]">TOP</text>
    <path d="M90 118 100 114 110 118V130L100 134 90 130Z" fill="#8183a8" />
    <path d="M90 118 100 114 110 118 100 121Z" fill="#9fa1c2" />
    <path d="M100 121 110 118V130L100 134Z" fill="#6e7096" />
    <path d="M115 122H125L120 127Z" fill="#3a3a60" />
  </svg>
);

const AxisCross = () => (
  <svg viewBox="-4 -5 54 54" className="absolute bottom-8 right-0 size-[54px]" fontSize="11" fontWeight="bold" aria-label="Axis cross">
    <path d="M7 38V17" stroke="#1e8a2a" strokeWidth="1.500" />
    <path d="M7 9 11 19H3Z" fill="#1e8a2a" />
    <path d="M8 38H30" stroke="#8a2430" strokeWidth="1.500" />
    <path d="M36 38 27 34V42Z" fill="#8a2430" />
    <path d="M7 34 11 38 7 42 3 38Z" fill="#1c1c88" />
    <text x="7" y="8" fill="#000">Y</text>
    <text x="37" y="38" fill="#000">X</text>
    <text x="7" y="38" fill="#000">Z</text>
  </svg>
);

const Viewport = () => (
  <div className="relative min-h-0 grow bg-linear-to-b from-[#333366] to-[#9898ac]">
    <svg viewBox="388 128 1477 860" className="absolute inset-0 size-full" fill="none" aria-label="Sketch">
      <path d="M447 653H1594" stroke="#c25560" strokeWidth="1.500" />
      <path d="M1021 128V988" stroke="#77e685" strokeWidth="2" />
      <g stroke="#fff" strokeWidth="2.500">
        {circles.map(([x, y, r], i) => <circle key={i} cx={x} cy={y} r={r} />)}
        {lines.map(([a, b, c, d], i) => <path key={i} d={`M${a} ${b}L${c} ${d}`} />)}
        {arcs.map(([, , r, a, b, c, d, l, s], i) => <path key={i} d={`M${a} ${b}A${r} ${r} 0 ${l} ${s} ${c} ${d}`} />)}
      </g>
      {points.map(([x, y], i) => <circle key={i} cx={x} cy={y} r="4.500" fill="#ff2206" />)}
    </svg>
    <NavCube />
    <AxisCross />
  </div>
);

const DocTab = ({ title, active }: { title: string; active?: boolean }) => (
  <div className={"flex items-center gap-1 border-b border-[#d0d0d0] " + (active ? "h-full bg-white pl-3.5 pr-2.5" : "h-[22px] px-2.5")}>
    <FreeCadLogo />
    <button role="tab" aria-selected={!!active}>{title}</button>
    <button aria-label={"Close " + title} className={"flex size-3.5 items-center justify-center rounded-sm border " + (active ? "border-[#c8502f] bg-[#ea6c4a]" : "border-[#999] bg-[#b9b9b9]")}>
      <svg viewBox="0 0 8 8" className="size-2" stroke="#fff" strokeWidth="2" aria-hidden="true"><path d="M1 1 7 7M7 1 1 7" /></svg>
    </button>
  </div>
);

const constraintTools = [
  "coincident", "onObject", "vertical", "horizontal", "parallel", "perpendicular", "tangent", "equal", "symmetric", "block", "|",
  "lock", "distX", "distY", "distance", "diameter+", "angle", "|", "driving", "activate",
];

const ConstraintBar = () => (
  <div role="toolbar" aria-label="Sketcher constraints" className="flex w-[55px] shrink-0 flex-col items-center border-b border-l border-b-[#b4b4b4] border-l-white pr-0.5">
    <span className="mb-1 mt-1 w-[46px] border-t-2 border-dotted border-[#bdbdbd]" />
    {constraintTools.map((n, i) => {
      if (n === "|") return <span key={i} className="my-0.5 h-px w-[45px] bg-[#d0d0d0]" />;
      const key = n.replace("+", "");
      return (
        <button key={i} aria-label={key} className={"flex h-[38px] items-center justify-center " + (n === key ? "" : "gap-1.5")}>
          {icons[key]}
          {n !== key && <Triangle />}
        </button>
      );
    })}
  </div>
);

const menus = ["Datoteka", "Uredi", "Pogled", "Alati", "Makro", "Sketcher", "Prozori", "Pomoć"];

export default function App() {
  return (
    <div className="flex h-screen min-h-[1039px] flex-col overflow-hidden bg-[#f0f0f0] font-['DejaVu_Sans_Condensed','Noto_Sans',sans-serif] text-[11px] leading-4 text-black">
      <header className="flex h-[23px] shrink-0 items-center gap-1 bg-white pl-0.5">
        <FreeCadLogo />
        <h1 className="grow font-['Open_Sans',sans-serif] text-[12px] text-[#999]">FreeCAD 0.21.0</h1>
        <div className="flex gap-9 pr-5 text-[#888]">
          <button aria-label="Minimize"><svg viewBox="0 0 10 10" className="size-2.5" stroke="currentColor" aria-hidden="true"><path d="M0 5.500H10" /></svg></button>
          <button aria-label="Restore"><svg viewBox="0 0 10 10" className="size-2.5" fill="none" stroke="currentColor" aria-hidden="true"><path d="M2.500 2.500V.5H9.500V7.500H7.500M.5 2.500H7.500V9.500H.5Z" /></svg></button>
          <button aria-label="Close window"><svg viewBox="0 0 10 10" className="size-2.5" stroke="currentColor" aria-hidden="true"><path d="M0 0 10 10M10 0 0 10" /></svg></button>
        </div>
      </header>
      <nav className="flex h-[21px] shrink-0 items-center bg-white text-[12px]">
        {menus.map((m) => <button key={m} className="px-2">{m}</button>)}
      </nav>
      <div className="flex h-[42px] shrink-0 border-b border-[#b4b4b4]">
        <Toolbar label="File" items={["new", "open", "save", "|", "undo-", "redo-", "|", "refresh", "|", "whatsthis"]} />
        <Toolbar label="Workbench">
          <div className="flex h-[22px] w-[145px] items-center border border-[#adadad] bg-[#e1e1e1] pl-1 pr-1">
            <svg viewBox="0 0 16 16" className="size-4 shrink-0" fill="none" stroke="#c81c28" strokeWidth="1.600" aria-hidden="true">
              <path d="M1.500 6H10V14.500H1.500Z" /><circle cx="10.500" cy="6" r="4.500" />
            </svg>
            <select aria-label="Workbench" className="min-w-0 grow appearance-none bg-transparent pl-[3px] text-[11px]">
              <option>Sketcher</option>
            </select>
            <svg viewBox="0 0 9 6" className="h-1.5 w-[9px]" fill="none" stroke="#444" aria-hidden="true"><path d="M.5 1 4.500 5 8.500 1" /></svg>
          </div>
        </Toolbar>
        <Toolbar label="Sketcher tools" items={["connect", "constr", "internal", "symmetry", "clone-", "array", "axes", "removeAxes"]} />
        <Toolbar label="B-spline tools" last items={["validate+", "closed", "degUp", "degDown", "knotUp+", "knotDown", "join"]} />
      </div>
      <div className="flex h-[42px] shrink-0 border-b border-[#b4b4b4]">
        <Toolbar
          label="View"
          items={["fitAll", "fitSel", "drawStyle+", "selection", "|", "back", "forward", "link+", "|", "sync+", "iso", "|", "front", "top", "right", "|", "rear", "bottom", "left", "|", "measure"]}
        />
        <Toolbar
          label="Sketcher geometries"
          items={["point", "line", "arc+", "circle+", "conic+", "bspline+", "|", "polyline", "rect+", "polygon+", "slot", "|", "fillet+", "trim", "extend", "split", "external", "carbon", "construction"]}
        />
        <Toolbar label="Virtual space" items={["toggle"]} />
        <Toolbar label="Sketcher" last items={["leave", "viewSketch", "section"]} />
      </div>
      <div className="flex min-h-0 grow">
        <SidePanel />
        <main className="flex min-w-0 grow flex-col">
          <Viewport />
          <div role="tablist" className="flex h-[23px] shrink-0 items-start">
            <DocTab title="Početna stranica" />
            <DocTab title="Ograničenja Sketcher radnog okruženja : 1*" active />
          </div>
        </main>
        <ConstraintBar />
      </div>
      <footer className="flex h-7 shrink-0 items-center pl-0.5 pt-1">
        <p className="grow">Preselected: Ograni__enja_Sketcher_radnog_okru__enja.Body006.Sketch006.H_Axis (2.403793 mm,0.000000 mm,1.000000 µm)</p>
        <button className="flex h-6 w-[81px] items-center gap-1 border-l border-[#d0d0d0] pl-5">
          <svg viewBox="0 0 10 14" className="h-3.5 w-2.5" fill="none" stroke="#222" strokeWidth="1.200" aria-hidden="true">
            <rect x="1" y="1" width="8" height="12" rx="3.500" /><path d="M5 3V6" />
          </svg>
          CAD
          <span className="pl-1.5"><Triangle className="text-black" /></span>
        </button>
        <span className="flex h-6 items-center border-l border-[#d0d0d0] px-0.5">382.67 mm x 222.55 mm</span>
      </footer>
    </div>
  );
}
